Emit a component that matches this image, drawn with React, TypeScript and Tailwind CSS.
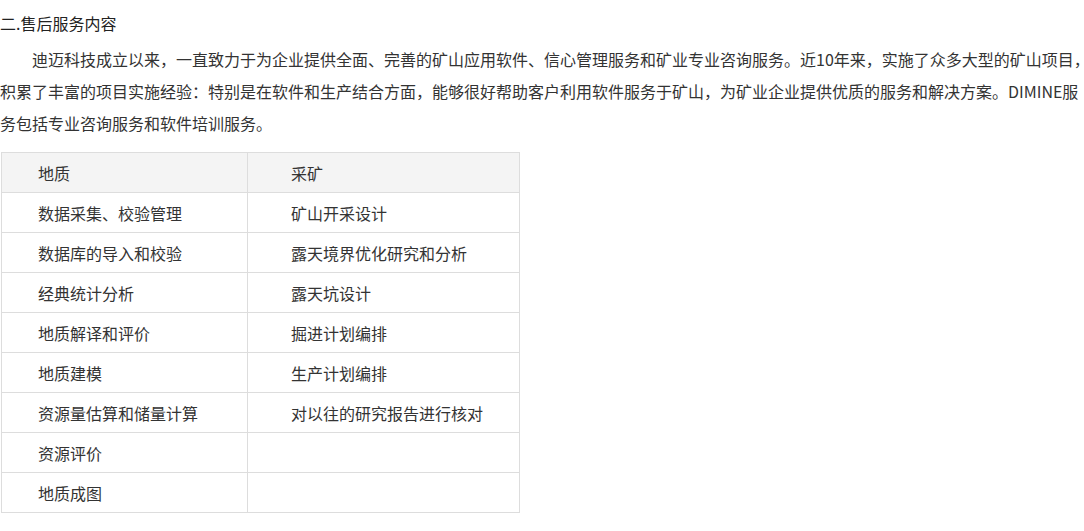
const GEO = [
  "数据采集、校验管理",
  "数据库的导入和校验",
  "经典统计分析",
  "地质解译和评价",
  "地质建模",
  "资源量估算和储量计算",
  "资源评价",
  "地质成图",
];

const MINING = [
  "矿山开采设计",
  "露天境界优化研究和分析",
  "露天坑设计",
  "掘进计划编排",
  "生产计划编排",
  "对以往的研究报告进行核对",
  "",
  "",
];

function Row({ left, right, head }: { left: string; right: string; head?: boolean }) {
  const bg = head ? "bg-[#f4f4f4]" : "bg-white";
  return (
    <div className="flex">
      <div className={`${bg} w-[246px] h-10 border-r border-b border-[#dddddd] flex items-center pl-9`}>
        {left}
      </div>
      <div className={`${bg} w-[272px] h-10 border-r border-b border-[#dddddd] flex items-center pl-[43px]`}>
        {right}
      </div>
    </div>
  );
}

export default function App() {
  return (
    <div
      className="w-[1084px] h-[531px] bg-white text-[#333333] text-base pt-[7px] overflow-hidden"
      style={{ fontFamily: '"Noto Sans CJK SC", "Noto Sans", sans-serif' }}
    >
      {/* Title */}
      <h2 className="leading-8 text-[#222222]">二.售后服务内容</h2>

      {/* Intro, broken where the original wraps */}
      <p className="mt-1 leading-8 whitespace-nowrap">
        <span className="pl-8">
          迪迈科技成立以来，一直致力于为企业提供全面、完善的矿山应用软件、信心管理服务和矿业专业咨询服务。近10年来，实施了众多大型的矿山项目
        </span>
        {/* line-end comma set half width, as the browser trims it */}
        <span className="inline-block w-2 overflow-hidden align-top">，</span>
        <br />
        积累了丰富的项目实施经验：特别是在软件和生产结合方面，能够很好帮助客户利用软件服务于矿山，为矿业企业提供优质的服务和解决方案。DIMINE服
        <br />
        务包括专业咨询服务和软件培训服务。
      </p>

      {/* Table */}
      <div className="mt-[13px] ml-px w-[519px] border-l border-t border-[#dddddd]">
        <Row left="地质" right="采矿" head />
        {GEO.map((g, i) => (
          <Row key={g} left={g} right={MINING[i]} />
        ))}
      </div>
    </div>
  );
}
